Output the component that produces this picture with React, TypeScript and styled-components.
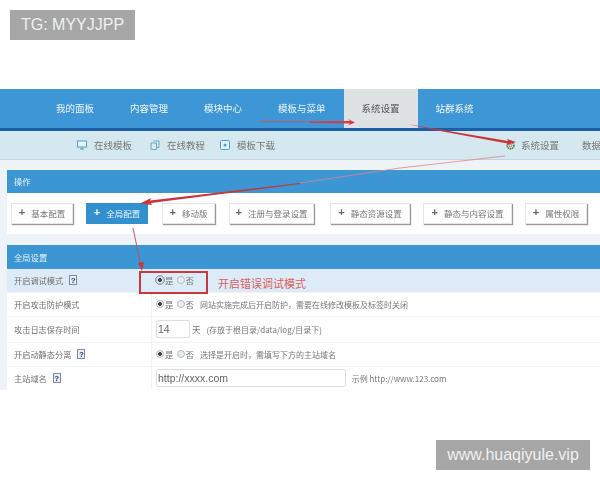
import React from "react";
import styled, { createGlobalStyle } from "styled-components";

const Global = createGlobalStyle`
  html, body { margin: 0; padding: 0; background: #fff; }
  * { box-sizing: border-box; }
`;

const Page = styled.div`
  position: relative;
  width: 600px;
  height: 480px;
  padding-top: 89px;
  overflow: hidden;
  background: #fff;
  font-family: "Noto Sans CJK SC", "Liberation Sans", sans-serif;
`;

const Frame = styled.div`
  display: flex;
  flex-direction: column;
  height: 301px;
  overflow: hidden;
  filter: blur(0.45px);
  background: #eef3f7;
`;

const Nav = styled.nav`
  display: flex;
  flex: none;
  height: 42px;
  padding-left: 38px;
  background: #3d96d6;
  border-bottom: 3px solid #1b5ea8;
`;

const NavItem = styled.div<{ $active?: boolean }>`
  display: flex;
  align-items: center;
  padding: 0 18px 2px;
  font-size: 9.5px;
  color: ${(p) => (p.$active ? "#555" : "#f2f7fb")};
  background: ${(p) => (p.$active ? "#dfe2e3" : "transparent")};
`;

const SubBar = styled.div`
  display: flex;
  flex: none;
  align-items: center;
  height: 29px;
  padding-left: 77px;
  background: #d5e8f0;
  border-bottom: 1px solid #c5d5e0;
`;

const SubItem = styled.div<{ $gap: number; $iconGap?: number }>`
  display: flex;
  align-items: center;
  gap: ${(p) => p.$iconGap ?? 7}px;
  margin-right: ${(p) => p.$gap}px;
  font-size: 9.5px;
  color: #777;
  white-space: nowrap;
`;

const Content = styled.div`
  flex: 1;
  padding: 10px 0 0 7px;
`;

const PanelHead = styled.div<{ $height: number }>`
  display: flex;
  align-items: center;
  height: ${(p) => p.$height}px;
  padding: 0 0 1px 7px;
  font-size: 8.3px;
  color: #e8f2f9;
  background: #3b96d3;
`;

const Actions = styled.div`
  display: flex;
  align-items: center;
  height: 41px;
  margin-bottom: 11px;
  padding-left: 4px;
  background: #fff;
`;

const ActionButton = styled.div<{ $active?: boolean; $width: number; $gap: number }>`
  display: flex;
  flex: none;
  align-items: center;
  justify-content: center;
  gap: 6px;
  width: ${(p) => p.$width}px;
  height: 21px;
  margin-right: ${(p) => p.$gap}px;
  padding-bottom: 2px;
  font-size: 8.5px;
  color: ${(p) => (p.$active ? "#e8f3fa" : "#777")};
  background: ${(p) => (p.$active ? "#3290cf" : "#fff")};
  border: ${(p) => (p.$active ? "0" : "1px solid #e6e6e6")};
  box-shadow: ${(p) => (p.$active ? "none" : "1px 1px 1px #999")};
  white-space: nowrap;
`;

const Plus = styled.span<{ $active?: boolean }>`
  font-family: "Liberation Sans", sans-serif;
  font-size: 11px;
  font-weight: 700;
  line-height: 1;
  color: ${(p) => (p.$active ? "#fff" : "#666")};
`;

const Row = styled.div<{ $height: number; $highlight?: boolean }>`
  display: flex;
  height: ${(p) => p.$height}px;
  background: ${(p) => (p.$highlight ? "#dcebf7" : "#fff")};
  border-bottom: 1px solid #f1f3f4;
`;

const Label = styled.div<{ $highlight?: boolean }>`
  display: flex;
  flex: none;
  align-items: center;
  gap: 6px;
  width: 145px;
  padding: 0 0 1px 7px;
  font-size: 8.2px;
  color: #707070;
  border-right: 1px solid ${(p) => (p.$highlight ? "#dcebf7" : "#f1f3f4")};
`;

const Help = styled.span`
  display: inline-flex;
  align-items: center;
  justify-content: center;
  width: 8px;
  height: 10px;
  font-family: "Liberation Sans", sans-serif;
  font-size: 8px;
  font-weight: 700;
  color: #24406f;
  background: #e7eef6;
  border: 1px solid #7c8ba3;
`;

const Value = styled.div`
  display: flex;
  align-items: center;
  padding: 0 0 1px 4px;
  font-size: 8.5px;
  color: #777;
  white-space: nowrap;
`;

const Radio = styled.span<{ $on?: boolean; $focus?: boolean }>`
  display: inline-block;
  flex: none;
  width: 8px;
  height: 8px;
  margin-right: 1px;
  border-radius: 50%;
  background: ${(p) => (p.$on ? "radial-gradient(circle, #444 0 1.6px, #e6ebf0 2.2px)" : "#e8ecef")};
  border: 1px solid #b5bcc4;
  outline: ${(p) => (p.$focus ? "1px solid #8e9cb0" : "none")};
`;

const RadioText = styled.span<{ $gap: number }>`
  margin-right: ${(p) => p.$gap}px;
`;

const Input = styled.div<{ $width: number }>`
  display: flex;
  flex: none;
  align-items: center;
  width: ${(p) => p.$width}px;
  height: 18px;
  padding-left: 1px;
  font-family: "Liberation Sans", sans-serif;
  font-size: 10.5px;
  color: #666;
  background: #fff;
  border: 1px solid #dcdfe2;
  border-radius: 2px;
`;

const Note = styled.span`
  font-size: 8px;
  color: #777;
`;

const RedBox = styled.div`
  position: absolute;
  left: 139px;
  top: 271px;
  width: 69px;
  height: 23px;
  border: 2px solid #c8393c;
`;

const RedLabel = styled.div`
  position: absolute;
  left: 218px;
  top: 275px;
  font-size: 11px;
  line-height: 16px;
  color: #de5f5c;
`;

const Arrows = styled.svg`
  position: absolute;
  left: 0;
  top: 0;
  filter: blur(0.3px);
`;

const Stamp = styled.div<{ $corner: "top" | "bottom" }>`
  position: absolute;
  display: flex;
  align-items: center;
  justify-content: center;
  height: 30px;
  font-family: "Liberation Sans", sans-serif;
  font-size: 16px;
  color: #f0f0f0;
  background: #a6a6a6;
  ${(p) =>
    p.$corner === "top"
      ? "left: 10px; top: 10px; width: 125px;"
      : "right: 10px; bottom: 10px; width: 154px;"}
`;

const Monitor = () => (
  <svg width="10" height="10" viewBox="0 0 10 10" fill="none" stroke="#4a9fc9">
    <rect x="0.5" y="1" width="9" height="6" fill="#e9f4f9" />
    <path d="M3 9h4M5 7v2" />
  </svg>
);
const Book = () => (
  <svg width="10" height="10" viewBox="0 0 10 10" fill="none" stroke="#6ba9c9">
    <path d="M3.5 1H9v6.5H7M1 3h5.5v6.5H1z" />
  </svg>
);
const Download = () => (
  <svg width="10" height="10" viewBox="0 0 10 10" fill="#e4f1f7" stroke="#4a9fc9">
    <rect x="0.5" y="0.5" width="9" height="9" rx="1" />
    <circle cx="5" cy="5" r="1.5" fill="#4a9fc9" stroke="none" />
  </svg>
);
const Gear = () => (
  <svg width="11" height="11" viewBox="0 0 11 11" fill="none">
    <circle cx="5.5" cy="5.5" r="3.4" stroke="#4d8a4d" strokeWidth="1.6" strokeDasharray="1.6 0.6" />
    <circle cx="5.5" cy="5.5" r="1.4" stroke="#a56a3a" strokeWidth="0.8" />
  </svg>
);

const buttons = [
  { text: "基本配置", width: 62, gap: 13 },
  { text: "全局配置", width: 62, gap: 14, active: true },
  { text: "移动版", width: 53, gap: 14 },
  { text: "注册与登录设置", width: 85, gap: 16 },
  { text: "静态资源设置", width: 80, gap: 13 },
  { text: "静态与内容设置", width: 89, gap: 13 },
  { text: "属性权限", width: 62, gap: 0 },
];

export default function App() {
  return (
    <Page>
      <Global />
      <Frame>
        <Nav>
          <NavItem>我的面板</NavItem>
          <NavItem>内容管理</NavItem>
          <NavItem>模块中心</NavItem>
          <NavItem>模板与菜单</NavItem>
          <NavItem $active>系统设置</NavItem>
          <NavItem>站群系统</NavItem>
        </Nav>
        <SubBar>
          <SubItem $gap={18}><Monitor />在线模板</SubItem>
          <SubItem $gap={15}><Book />在线教程</SubItem>
          <SubItem $gap={230}><Download />模板下载</SubItem>
          <SubItem $gap={23} $iconGap={5}><Gear />系统设置</SubItem>
          <SubItem $gap={0}>数据</SubItem>
        </SubBar>
        <Content>
          <PanelHead $height={23}>操作</PanelHead>
          <Actions>
            {buttons.map((b) => (
              <ActionButton key={b.text} $active={b.active} $width={b.width} $gap={b.gap}>
                <Plus $active={b.active}>+</Plus>
                {b.text}
              </ActionButton>
            ))}
          </Actions>
          <PanelHead $height={24}>全局设置</PanelHead>
          <Row $height={24} $highlight>
            <Label $highlight>开启调试模式<Help>?</Help></Label>
            <Value>
              <Radio $on $focus />
              <RadioText $gap={3}>是</RadioText>
              <Radio />
              <RadioText $gap={0}>否</RadioText>
            </Value>
          </Row>
          <Row $height={24}>
            <Label>开启攻击防护模式</Label>
            <Value>
              <Radio $on />
              <RadioText $gap={3}>是</RadioText>
              <Radio />
              <RadioText $gap={6}>否</RadioText>
              <Note>网站实施完成后开启防护，需要在线修改模板及标签时关闭</Note>
            </Value>
          </Row>
          <Row $height={26}>
            <Label>攻击日志保存时间</Label>
            <Value>
              <Input $width={34}>14</Input>
              <RadioText $gap={6}>&nbsp;天</RadioText>
              <Note>(存放于根目录/data/log/目录下)</Note>
            </Value>
          </Row>
          <Row $height={24}>
            <Label>开启动静态分离<Help>?</Help></Label>
            <Value>
              <Radio $on />
              <RadioText $gap={3}>是</RadioText>
              <Radio />
              <RadioText $gap={6}>否</RadioText>
              <Note>选择是开启时，需填写下方的主站域名</Note>
            </Value>
          </Row>
          <Row $height={24}>
            <Label>主站域名<Help>?</Help></Label>
            <Value>
              <Input $width={190}>http://xxxx.com</Input>
              <RadioText $gap={0}>&nbsp;&nbsp;&nbsp;</RadioText>
              <Note>示例 http://www.123.com</Note>
            </Value>
          </Row>
        </Content>
      </Frame>
      <RedBox />
      <RedLabel>开启错误调试模式</RedLabel>
      <Arrows width="600" height="480" viewBox="0 0 600 480" fill="none">
        <path d="M260 121.5L350 121.8" stroke="#d8505c" strokeWidth="0.9" />
        <path d="M310 121.8L350 121L348 119L355 122.4L348 125.5L350 123.6L310 122.8z" fill="#d63a3f" />
        <path d="M407 124L508 141L507 139L516 142L507 145L507.5 143.5L440 131z" fill="#c9353a" />
        <path d="M505 156L400 168L300 183" stroke="#d9868c" strokeWidth="0.8" />
        <path d="M300 183L150 200.5L151 198L140 203.5L152 205L151 203L300 184z" fill="#c9353a" />
        <path d="M133 228L141 266" stroke="#c9474c" strokeWidth="0.9" />
        <path d="M138 263L142 271L144 262z" fill="#c9353a" />
      </Arrows>
      <Stamp $corner="top">TG: MYYJJPP</Stamp>
      <Stamp $corner="bottom">www.huaqiyule.vip</Stamp>
    </Page>
  );
}
